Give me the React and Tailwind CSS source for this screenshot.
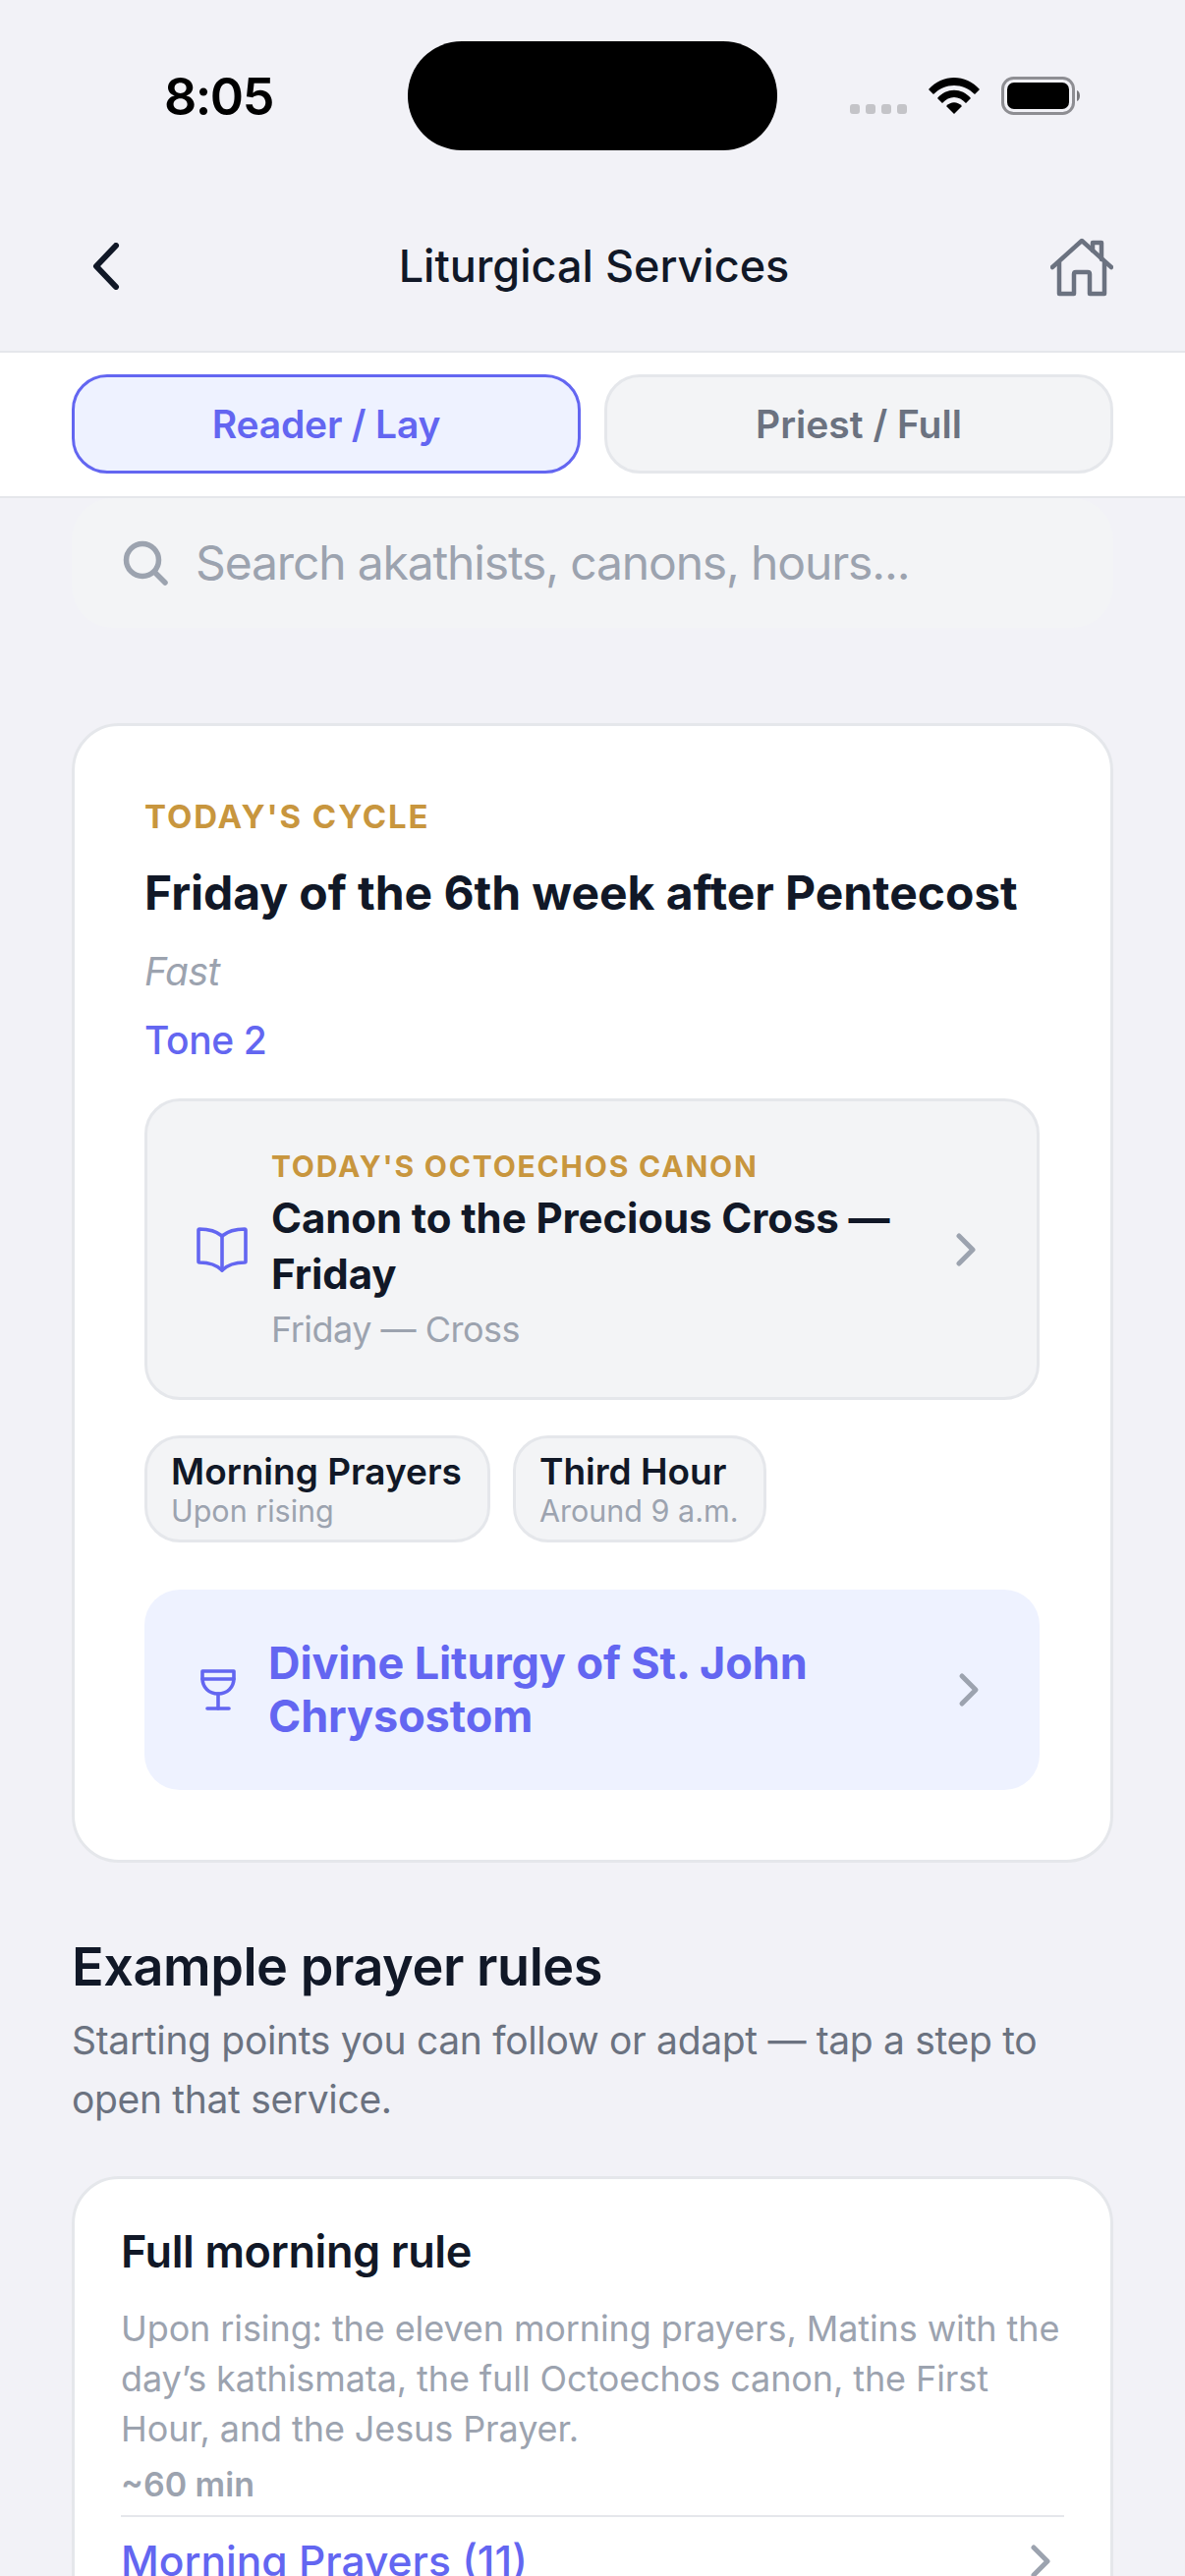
import React from "react";

const Chevron = ({ className }) => (
  <svg viewBox="0 0 24 36" fill="none" stroke="currentColor" strokeWidth="5" strokeLinecap="round" strokeLinejoin="round" className={className}>
    <path d="M5 4 L19 18 L5 32" />
  </svg>
);

const StatusBar = () => (
  <div className="relative h-[200px] shrink-0 flex items-start">
    <div className="ml-[167px] mt-[69px] w-[112px] text-[52px] leading-[60px] font-semibold text-black tracking-[-1.5px]">8:05</div>
    <div className="absolute left-[415px] top-[42px] w-[376px] h-[111px] rounded-[55px] bg-black" />
    <div className="absolute left-[865px] top-[78px] flex items-start">
      <div className="mt-[28px] flex gap-[6px]">
        {[0, 1, 2, 3].map((i) => (
          <div key={i} className="w-[10px] h-[10px] rounded-[3px] bg-[#c4c4c8]" />
        ))}
      </div>
      <svg viewBox="0 0 52 38" className="ml-[22px] w-[52px] h-[38px]">
        <path d="M0 13 C14 -3 38 -3 52 13 L47 18 C35 6 17 6 5 18 Z" fill="#000" />
        <path d="M9 22 C18 11 34 11 43 22 L38 27 C31 19 21 19 14 27 Z" fill="#000" />
        <path d="M18 30 C23 25 29 25 34 30 L26 38 Z" fill="#000" />
      </svg>
      <svg viewBox="0 0 84 40" className="ml-[22px] w-[84px] h-[40px]">
        <rect x="1.5" y="1.5" width="72" height="36" rx="11" fill="none" stroke="#8e8e93" strokeWidth="3" />
        <rect x="6" y="6" width="63" height="27" rx="7" fill="#000" />
        <path d="M77 14 C81 15 81 24 77 25 Z" fill="#77777b" />
      </svg>
    </div>
  </div>
);

const NavBar = () => (
  <div className="h-[157px] shrink-0 pl-[94px] pr-[73px] flex items-start justify-between">
    <svg viewBox="0 0 28 48" fill="none" stroke="#111827" strokeWidth="6" strokeLinecap="round" strokeLinejoin="round" className="mt-[47px] w-[28px] h-[48px]">
      <path d="M24 3 L4 24 L24 45" />
    </svg>
    <div className="mt-[44px] text-[45px] leading-[54px] font-medium text-[#111827] ml-[18px]">Liturgical Services</div>
    <svg viewBox="0 0 64 60" fill="none" stroke="#6b7280" strokeWidth="4.5" strokeLinecap="round" strokeLinejoin="round" className="mt-[42px] w-[64px] h-[60px]">
      <path d="M2 30 L32 3 L62 30" />
      <path d="M9 25 V57 H24 V37 Q24 35 26 35 H38 Q40 35 40 37 V57 H55 V25" />
      <path d="M43 13 V5 H52 V22" />
    </svg>
  </div>
);

const Tabs = () => (
  <div className="h-[150px] shrink-0 bg-white border-y-[2px] border-[#e5e7eb] px-[73px] pb-[2px] flex items-center gap-[24px]">
    <div className="flex-1 h-[101px] pt-[2px] rounded-[36px] border-[3px] border-[#6366f1] bg-[#eef2ff] flex items-center justify-center text-[39px] font-semibold tracking-[-0.2px] text-[#6366f1]">Reader / Lay</div>
    <div className="flex-1 h-[101px] pt-[2px] rounded-[36px] border-[3px] border-[#e5e7eb] bg-[#f3f4f6] flex items-center justify-center text-[39px] font-semibold text-[#6b7280]">Priest / Full</div>
  </div>
);

const Search = () => (
  <div className="mx-[73px] h-[132px] shrink-0 rounded-[42px] bg-[#f3f4f6] pl-[52px] flex items-center gap-[28px]">
    <svg viewBox="0 0 46 46" fill="none" stroke="#9ca3af" strokeWidth="5.5" strokeLinecap="round" className="w-[46px] h-[46px]">
      <circle cx="20" cy="20" r="16.5" />
      <path d="M32 32 L43 43" />
    </svg>
    <div className="text-[48px] leading-[56px] tracking-[-1.15px] text-[#9ca3af]">Search akathists, canons, hours...</div>
  </div>
);

const TodayCard = () => (
  <div className="mx-[73px] mt-[97px] shrink-0 rounded-[48px] border-[3px] border-[#e5e7eb] bg-white pt-[72px] pb-[71px] pl-[71px] pr-[72px]">
    <div className="text-[33px] leading-[40px] font-bold tracking-[1.9px] text-[#c8963e]">TODAY'S CYCLE</div>
    <div className="mt-[25px] text-[48px] leading-[66px] font-bold tracking-[-0.05px] text-[#111827]">Friday of the 6th week after Pentecost</div>
    <div className="mt-[21px] text-[39px] leading-[52px] italic tracking-[-0.5px] text-[#9ca3af]">Fast</div>
    <div className="mt-[18px] text-[39px] leading-[52px] font-medium tracking-[-0.4px] text-[#6366f1]">Tone 2</div>
    <div className="mt-[33px] h-[307px] rounded-[36px] border-[3px] border-[#e5e7eb] bg-[#f3f4f6] pl-[50px] pr-[60px] pt-[1px] flex items-center">
      <svg viewBox="0 0 52 46" fill="none" stroke="#6366f1" strokeWidth="3.6" strokeLinecap="round" strokeLinejoin="round" className="w-[52px] h-[46px] shrink-0">
        <path d="M26 9 V44" />
        <path d="M26 9 C20 4 11 2 3 2 Q2 2 2 3 V35 Q2 36 3 36 C11 36 20 38 26 44 C32 38 41 36 49 36 Q50 36 50 35 V3 Q50 2 49 2 C41 2 32 4 26 9 Z" />
      </svg>
      <div className="ml-[24px] flex-1 min-w-0">
        <div className="text-[30px] leading-[36px] font-bold tracking-[1.8px] text-[#c8963e]">TODAY'S OCTOECHOS CANON</div>
        <div className="mt-[6px] text-[42px] leading-[57px] font-bold tracking-[-0.1px] text-[#111827]">Canon to the Precious Cross — Friday</div>
        <div className="mt-[6px] text-[36px] leading-[44px] tracking-[-0.5px] text-[#9ca3af]">Friday — Cross</div>
      </div>
      <Chevron className="w-[24px] h-[36px] text-[#9ca3af] shrink-0" />
    </div>
    <div className="mt-[36px] flex gap-[23px]">
      <div className="h-[109px] rounded-[36px] border-[3px] border-[#e5e7eb] bg-[#f3f4f6] pl-[24px] pr-[26px] flex flex-col justify-center">
        <div className="text-[37px] leading-[44px] font-semibold text-[#111827]">Morning Prayers</div>
        <div className="text-[30.5px] leading-[36px] text-[#9ca3af]">Upon rising</div>
      </div>
      <div className="h-[109px] rounded-[36px] border-[3px] border-[#e5e7eb] bg-[#f3f4f6] pl-[24px] pr-[26px] flex flex-col justify-center">
        <div className="text-[37px] leading-[44px] font-semibold text-[#111827]">Third Hour</div>
        <div className="text-[30.5px] leading-[36px] text-[#9ca3af]">Around 9 a.m.</div>
      </div>
    </div>
    <div className="mt-[48px] h-[204px] rounded-[36px] bg-[#eef2ff] pl-[57px] pr-[60px] flex items-center">
      <svg viewBox="0 0 36 42" fill="none" stroke="#6366f1" strokeWidth="3.6" strokeLinecap="round" strokeLinejoin="round" className="w-[36px] h-[42px] shrink-0">
        <path d="M2 2 H34 V9 C34 19 27 25 18 25 C9 25 2 19 2 9 Z" />
        <path d="M2 10 H34" />
        <path d="M18 25 V40" />
        <path d="M7 40 H29" />
      </svg>
      <div className="ml-[33px] flex-1 text-[45px] leading-[54px] font-bold tracking-[-0.1px] text-[#6366f1]">Divine Liturgy of St. John Chrysostom</div>
      <Chevron className="w-[24px] h-[36px] text-[#9ca3af] shrink-0" />
    </div>
  </div>
);

const Rules = () => (
  <div className="mx-[73px] mt-[73px] shrink-0">
    <div className="text-[54px] leading-[66px] font-semibold tracking-[-0.45px] text-[#111827]">Example prayer rules</div>
    <div className="mt-[12px] text-[39px] leading-[60px] tracking-[-0.33px] text-[#6b7280]">Starting points you can follow or adapt — tap a step to open that service.</div>
    <div className="mt-[48px] rounded-[48px] border-[3px] border-[#e5e7eb] bg-white pt-[47px] pl-[47px] pr-[47px] pb-[60px]">
      <div className="text-[45px] leading-[54px] font-semibold tracking-[-0.4px] text-[#111827]">Full morning rule</div>
      <div className="mt-[26px] text-[36px] leading-[51px] tracking-[-0.1px] text-[#9ca3af]">Upon rising: the eleven morning prayers, Matins with the day’s kathismata, the full Octoechos canon, the First Hour, and the Jesus Prayer.</div>
      <div className="mt-[10px] text-[34px] leading-[42px] font-semibold text-[#9ca3af]">~60 min</div>
      <div className="mt-[10px] border-t-[2px] border-[#e5e7eb] pt-[18px] flex items-center justify-between">
        <div className="text-[42.5px] leading-[54px] font-medium text-[#6366f1]">Morning Prayers (11)</div>
        <Chevron className="mr-[12px] w-[24px] h-[36px] text-[#9ca3af]" />
      </div>
    </div>
  </div>
);

export default function App() {
  return (
    <div className="w-[1206px] h-[2622px] overflow-hidden bg-[#f2f2f7] flex flex-col font-['Inter',sans-serif]">
      <StatusBar />
      <NavBar />
      <Tabs />
      <Search />
      <TodayCard />
      <Rules />
    </div>
  );
}
